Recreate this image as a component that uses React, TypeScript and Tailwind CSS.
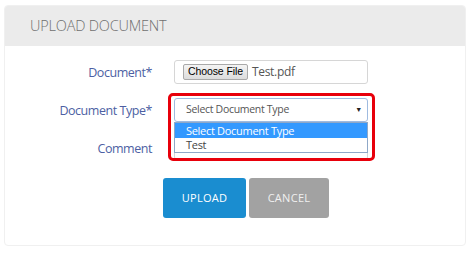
import React from 'react';

function Field({ label, children }: { label: string; children: React.ReactNode }) {
  return (
    <div className="flex items-center h-[24px]">
      <div className="w-[148px] pr-[1px] pt-[2px] text-right text-[12.5px] tracking-[-0.45px] text-[#4d5fa3]">{label}</div>
      <div className="ml-[21px] w-[194px] h-full">{children}</div>
    </div>
  );
}

export default function App() {
  return (
    <div className="w-[474px] h-[253px] bg-white pt-[5px] pl-[4px] font-['Open_Sans',sans-serif]">
      <div className="relative w-[462px] h-[241px] rounded-[4px] border border-[#f0f0f0] overflow-hidden">
        <div className="h-[40px] bg-[#ebebeb] flex items-center pl-[25px] text-[14.5px] font-light tracking-[-0.2px] text-[#6f6f6f]">
          UPLOAD DOCUMENT
        </div>

        <div className="flex flex-col gap-[14px] pt-[14px]">
          <Field label="Document*">
            <div className="h-full rounded-[3px] border border-[#d6d6d6] flex items-center pl-[8px]">
              <span className="h-[16px] px-[4px] flex items-center rounded-[2px] border border-[#a9a9a9] bg-gradient-to-b from-[#f4f4f4] to-[#dcdcdc] text-[10.5px] tracking-[-0.1px] text-black font-['Liberation_Sans',sans-serif]">
                Choose File
              </span>
              <span className="ml-[4px] text-[12px] tracking-[-0.3px] text-[#555]">Test.pdf</span>
            </div>
          </Field>
          <Field label="Document Type*">
            <div className="h-full rounded-[3px] border border-[#9fbbe0] flex items-center pl-[11px] pr-[5px] text-[10.5px] tracking-[-0.3px] text-[#555]">
              <span className="flex-1">Select Document Type</span>
              <span className="text-[7px] text-[#222]">▼</span>
            </div>
          </Field>
          <Field label="Comment">
            <div className="h-full rounded-[3px] border border-[#d6d6d6]" />
          </Field>
        </div>

        <div className="flex gap-[3px] mt-[18px] ml-[158px]">
          <button className="w-[83px] h-[40px] rounded-[3px] bg-[#1a8dd0] text-white text-[11px] tracking-[0.3px]">
            UPLOAD
          </button>
          <button className="w-[80px] h-[40px] rounded-[3px] bg-[#a2a2a2] text-[#f0f0f0] text-[11px] tracking-[0.3px]">
            CANCEL
          </button>
        </div>

        {/* open dropdown list */}
        <div className="absolute left-[169px] top-[116px] w-[194px] h-[31px] bg-white border border-[#8fa8c8] text-[11px] tracking-[-0.3px]">
          <div className="h-[15px] bg-[#3399ff] text-white pl-[11px] leading-[15px]">Select Document Type</div>
          <div className="h-[13px] text-[#444] pl-[11px] leading-[13px]">Test</div>
        </div>

        {/* red highlight */}
        <div className="absolute left-[163px] top-[87px] w-[207px] h-[68px] rounded-[5px] border-[3px] border-[#e8000b]" />
      </div>
    </div>
  );
}
